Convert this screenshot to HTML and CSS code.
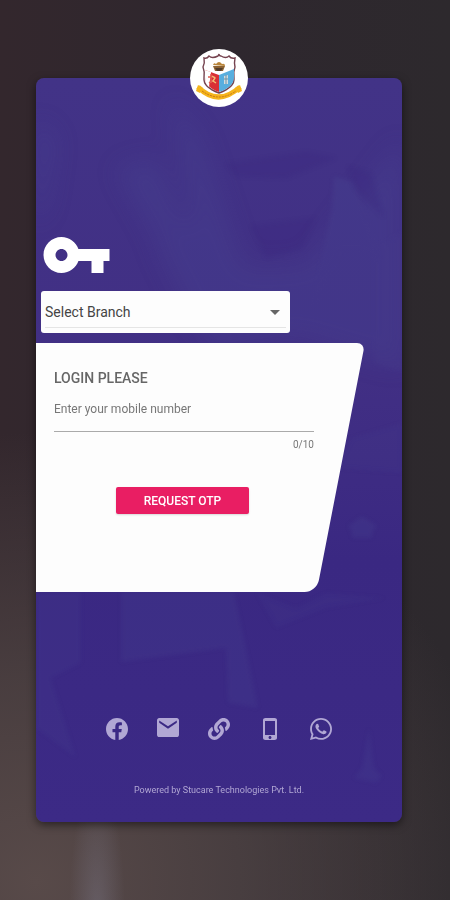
FILE: index.html
```
<!DOCTYPE html>
<html lang="en">
<head>
  <meta charset="UTF-8" />
  <meta name="viewport" content="width=device-width, initial-scale=1.0" />
  <title>Login</title>
  <link rel="stylesheet" href="styles.css">
</head>
<body>
  <main class="login-card">
    <!-- faint shapes behind the form -->
    <svg class="backdrop" viewBox="0 0 366 744" preserveAspectRatio="none" aria-hidden="true">
      <defs>
        <filter id="soft" x="-20%" y="-20%" width="140%" height="140%"><feGaussianBlur stdDeviation="12" /></filter>
        <filter id="edge"><feGaussianBlur stdDeviation="2" /></filter>
      </defs>
      <g fill="#4a4a94" opacity="0.3">
        <g filter="url(#soft)">
          <path d="M0 40 20 60 10 130 0 150z" />
          <path d="M135 20 165 60 195 150 210 190 160 250 120 170 155 140z" />
          <path d="M170 190 270 185 366 60 366 290 260 260 170 270z" />
          <path d="M80 90 120 80 150 150 130 180z" />
        </g>
        <g filter="url(#edge)">
          <path d="M298 98 318 105 345 182 325 172 304 172 278 228 296 130z" />
          <path d="M339 170 366 155 366 294 339 285z" opacity="0.5" />
          <path d="M315 360 366 345 366 395 300 390z" opacity="0.4" />
          <path d="M85 514 198 514 212 580 222 630 192 625 190 570 85 584z" opacity="0.7" />
          <path d="M0 514 45 514 45 585 15 600 40 680 0 650z" opacity="0.5" />
          <path d="M312 448 326 438 341 448 336 454 336 460 316 460 316 454z" opacity="0.8" />
          <path d="M318 700 326 690 333 650 338 690 346 698 340 705z" opacity="0.7" />
          <path d="M220 514 260 530 290 515 350 520 290 530 240 550z" opacity="0.4" />
        </g>
      </g>
      <g fill="#38237c" opacity="0.2" filter="url(#edge)">
        <path d="M190 86 270 74 300 80 250 100 200 98z" />
        <path d="M215 148 280 140 265 170 230 180z" />
        <path d="M312 88 335 95 348 140 318 110z" />
      </g>
    </svg>

    <div class="logo">
      <svg viewBox="0 0 58 58" role="img" aria-label="School crest">
        <path fill="#fff" stroke="#75434f" stroke-width="1.4" d="M14 9q3 1 5-2 3 3 9 0 1-2 1-2 0 2 2 2 5 3 8 0 2 3 6 2-1 5 0 9-2 5-1 11 1 9-15 15-16-6-15-15 1-6-1-11 2-4 1-9z" />
        <path fill="#d92f35" d="M15 21 29 26V43Q15 38 15 28z" />
        <path fill="#fff" d="M15 21 21 23 19 38Q15 35 15 28z" />
        <path fill="#58aede" d="M44 20 29 26V43Q44 38 44 28z" />
        <path fill="none" stroke="#e25c50" stroke-width="1.5" d="M18 28h7M21 25v9M19 34l5-3" />
        <path fill="none" stroke="#f4bd73" stroke-width="1.4" d="M22 27l3 2-2 3 3 2" />
        <path fill="#d3dce0" d="M34 27l4-1v9h-4z" />
        <path stroke="#6c93a5" d="M36 26v9M34 30h4" />
        <path fill="#8c6232" d="M23 17h12l-2 5h-8z" />
        <path fill="#b9853a" d="M23 16q1-3 3-1 3-4 6 0 3-1 3 2z" />
        <path fill="#503c2c" d="M25 19h8l-2 3h-4z" />
        <path fill="none" stroke="#f5b51c" stroke-width="5" d="M8 38q20 20 42 0" />
        <path fill="#f5b51c" d="M8 36l5 3-3 5-4-2zM50 36l-5 3 3 5 4-2z" />
        <path fill="none" stroke="#c5751b" stroke-width="1" stroke-dasharray="2 1" d="M12 42q17 12 34 0" />
      </svg>
    </div>

    <section class="branch">
      <svg class="key-icon" viewBox="1 6 22 12" fill="#fff" aria-hidden="true">
        <path d="M12.65 10C11.83 7.67 9.61 6 7 6c-3.31 0-6 2.69-6 6s2.69 6 6 6c2.61 0 4.83-1.67 5.65-4H17v4h4v-4h2v-4H12.65zM7 14c-1.1 0-2-.9-2-2s.9-2 2-2 2 .9 2 2-.9 2-2 2z" />
      </svg>
      <div class="select-box">
        <select aria-label="Branch">
          <option>Select Branch</option>
        </select>
        <svg class="arrow" viewBox="0 0 10 5" aria-hidden="true"><path fill="#666" d="M0 0h10L5 5z" /></svg>
      </div>
    </section>

    <form class="login-panel">
      <h1>LOGIN PLEASE</h1>
      <input type="tel" maxlength="10" placeholder="Enter your mobile number" aria-label="Mobile number">
      <div class="counter">0/10</div>
      <button type="button">REQUEST OTP</button>
    </form>

    <footer>
      <nav class="contact-links">
        <a href="#" aria-label="Facebook">
          <svg viewBox="0 0 24 24"><path d="M24 12.07C24 5.4 18.63 0 12 0S0 5.4 0 12.07c0 6.03 4.39 11.02 10.13 11.93v-8.44H7.08v-3.49h3.05V9.41c0-3.02 1.79-4.69 4.53-4.69 1.31 0 2.69.24 2.69.24v2.97h-1.52c-1.49 0-1.95.93-1.95 1.88v2.26h3.32l-.53 3.49h-2.79V24C19.61 23.09 24 18.1 24 12.07z" /></svg>
        </a>
        <a href="#" aria-label="Email">
          <svg class="mail" viewBox="2 4 20 16" preserveAspectRatio="none"><path d="M20 4H4c-1.1 0-2 .9-2 2v12c0 1.1.9 2 2 2h16c1.1 0 2-.9 2-2V6c0-1.1-.9-2-2-2zm0 4l-8 5-8-5V6l8 5 8-5v2z" /></svg>
        </a>
        <a href="#" aria-label="Website">
          <svg viewBox="0 0 512 512"><path d="M326.612 185.391c59.747 59.809 58.927 155.698.36 214.59-.11.12-.24.25-.36.37l-67.2 67.2c-59.27 59.27-155.699 59.262-214.96 0-59.27-59.26-59.27-155.7 0-214.96l37.106-37.106c9.84-9.84 26.786-3.3 27.294 10.606.648 17.722 3.826 35.527 9.69 52.721 1.986 5.822.567 12.262-3.783 16.612l-13.087 13.087c-28.026 28.026-28.905 73.66-1.155 101.96 28.024 28.579 74.086 28.749 102.325.51l67.2-67.19c28.191-28.191 28.073-73.757 0-101.83-3.701-3.694-7.429-6.564-10.341-8.569a16.037 16.037 0 0 1-6.947-12.606c-.396-10.567 3.348-21.456 11.698-29.806l21.054-21.055c5.521-5.521 14.182-6.199 20.584-1.731a152.482 152.482 0 0 1 20.522 17.197zM467.547 44.449c-59.261-59.262-155.69-59.27-214.96 0l-67.2 67.2c-.12.12-.25.25-.36.37-58.566 58.892-59.387 154.781.36 214.59a152.454 152.454 0 0 0 20.521 17.196c6.402 4.468 15.064 3.789 20.584-1.731l21.054-21.055c8.35-8.35 12.094-19.239 11.698-29.806a16.037 16.037 0 0 0-6.947-12.606c-2.912-2.005-6.64-4.875-10.341-8.569-28.073-28.073-28.191-73.639 0-101.83l67.2-67.19c28.239-28.239 74.3-28.069 102.325.51 27.75 28.3 26.872 73.934-1.155 101.96l-13.087 13.087c-4.35 4.35-5.769 10.79-3.783 16.612 5.864 17.194 9.042 34.999 9.69 52.721.509 13.906 17.454 20.446 27.294 10.606l37.106-37.106c59.271-59.259 59.271-155.699.001-214.959z" /></svg>
        </a>
        <a href="#" aria-label="Phone">
          <svg viewBox="0 1 22 22"><path d="M15.5 1h-9C5.12 1 4 1.9 4 3v18c0 1.1 1.12 2 2.5 2h9c1.38 0 2.5-.9 2.5-2V3c0-1.1-1.12-2-2.5-2zM11 22c-.83 0-1.500-.67-1.500-1.500s.67-1.500 1.500-1.500 1.500.67 1.500 1.500-.67 1.500-1.500 1.500zm5-4H6V4h10v14z" /></svg>
        </a>
        <a href="#" aria-label="WhatsApp">
          <svg viewBox="0 0 448 448"><path d="M380.900 65.100C339 23.100 283.200 0 223.900 0 101.500 0 1.900 99.600 1.900 222c0 39.100 10.200 77.300 29.600 111L0 448l117.700-30.900c32.400 17.700 68.900 27 106.100 27h.1c122.300 0 224.100-99.600 224.100-222 0-59.300-25.200-115-67.100-157zm-157 341.600c-33.200 0-65.700-8.900-94-25.700l-6.700-4-69.800 18.300L72 327.200l-4.400-7c-18.500-29.400-28.200-63.300-28.200-98.200 0-101.700 82.800-184.500 184.600-184.500 49.300 0 95.600 19.200 130.400 54.100 34.800 34.900 56.200 81.200 56.100 130.500 0 101.800-84.900 184.600-186.600 184.600zm101.200-138.200c-5.500-2.800-32.800-16.200-37.900-18-5.100-1.900-8.800-2.800-12.500 2.800-3.700 5.600-14.300 18-17.600 21.800-3.200 3.700-6.500 4.200-12 1.400-32.600-16.300-54-29.100-75.500-66-5.700-9.800 5.700-9.100 16.300-30.300 1.800-3.700.9-6.900-.5-9.700-1.400-2.800-12.500-30.100-17.100-41.200-4.500-10.800-9.100-9.300-12.500-9.500-3.200-.2-6.900-.2-10.600-.2-3.700 0-9.700 1.400-14.800 6.900-5.100 5.600-19.400 19-19.400 46.300 0 27.300 19.900 53.700 22.600 57.400 2.800 3.700 39.100 59.700 94.800 83.800 35.200 15.200 49 16.500 66.600 13.900 10.700-1.600 32.800-13.400 37.400-26.400 4.600-13 4.600-24.100 3.200-26.400-1.300-2.500-5-3.900-10.500-6.600z" /></svg>
        </a>
      </nav>
      <p>Powered by Stucare Technologies Pvt. Ltd.</p>
    </footer>
  </main>
</body>
</html>
```
FILE: styles.css
```
* { box-sizing: border-box; }
body {
  min-height: 100vh;
  margin: 0;
  padding: 78px 48px 78px 36px;
  display: flex;
  font-family: Roboto, "Liberation Sans", sans-serif;
  background:
    radial-gradient(ellipse 28px 140px at 97px 102%, rgba(124, 120, 136, 0.45), transparent),
    radial-gradient(ellipse 105% 50% at 8% 98%, #584a49, rgba(82, 71, 71, 0.7) 45%, transparent),
    linear-gradient(90deg, #33272d, #2e272e 50%, #2d292d);
}

.login-card {
  position: relative;
  flex: 1;
  display: flex;
  flex-direction: column;
  border-radius: 8px;
  background: linear-gradient(#423387, #412f84 40%, #3a2882 65%, #3c2a86);
  box-shadow: 0 3px 8px rgba(0, 0, 0, 0.5);
}
.backdrop {
  position: absolute;
  width: 100%;
  height: 100%;
  border-radius: 8px;
}
.logo {
  position: absolute;
  top: -29px;
  left: 50%;
  width: 58px;
  height: 58px;
  transform: translateX(-50%);
  border-radius: 50%;
  background: #fff;
}
.logo svg { display: block; }

.branch {
  position: relative;
  padding: 159px 5px 10px;
}
.key-icon {
  display: block;
  width: 67px;
  height: 36px;
  margin: 0 2px 18px;
}
.select-box {
  position: relative;
  width: 70%;
  padding: 5px 4px;
  border-radius: 3px;
  background: #fdfdfd;
}
.select-box select {
  display: block;
  width: 100%;
  height: 32px;
  padding: 0;
  border: none;
  border-bottom: 1px solid #e5e5e5;
  appearance: none;
  background: none;
  font: 14px Roboto, "Liberation Sans", sans-serif;
  color: #444;
}
.arrow {
  position: absolute;
  top: 19px;
  right: 10px;
  width: 10px;
  height: 5px;
  pointer-events: none;
}

.login-panel {
  position: relative;
  width: 90%;
  padding: 26px 16px 78px 18px;
  overflow: hidden;
  color: #666;
}
/* slanted right edge */
.login-panel::before {
  content: "";
  position: absolute;
  inset: 0;
  border-radius: 0 8px 12px 0;
  background: #fdfdfd;
  transform: skewX(-11deg);
  transform-origin: top right;
  box-shadow: -60px 0 #fdfdfd;
}
.login-panel > * { position: relative; }
.login-panel h1 {
  margin: 0 0 11px;
  font-size: 14px;
  line-height: 18px;
  font-weight: 500;
}
.login-panel input {
  display: block;
  width: 88%;
  height: 34px;
  padding: 0 0 12px;
  border: none;
  border-bottom: 1px solid #aaa;
  border-radius: 0;
  outline: none;
  background: none;
  font: 12px Roboto, "Liberation Sans", sans-serif;
  color: #666;
}
.login-panel input::placeholder {
  color: #777;
  opacity: 1;
}
.counter {
  width: 88%;
  padding-top: 5px;
  font-size: 10px;
  line-height: 16px;
  text-align: right;
  color: #777;
}
.login-panel button {
  display: block;
  width: 45%;
  height: 27px;
  margin: 34px 0 0 62px;
  padding: 0;
  border: none;
  border-radius: 2px;
  background: #e91e63;
  box-shadow: 0 1px 2px rgba(0, 0, 0, 0.15);
  font: 500 12px Roboto, "Liberation Sans", sans-serif;
  color: #fff;
  cursor: pointer;
}

footer {
  position: relative;
  margin-top: auto;
  padding-bottom: 26px;
  color: #b1a7d4;
}
.contact-links {
  display: flex;
  justify-content: center;
  align-items: center;
  gap: 29px;
}
.contact-links a {
  width: 22px;
  height: 22px;
  color: inherit;
}
.contact-links svg {
  display: block;
  width: 22px;
  height: 22px;
  fill: currentColor;
}
.contact-links .mail { height: 19px; }
footer p {
  margin: 44px 0 0;
  font-size: 9px;
  line-height: 12px;
  text-align: center;
}
```
